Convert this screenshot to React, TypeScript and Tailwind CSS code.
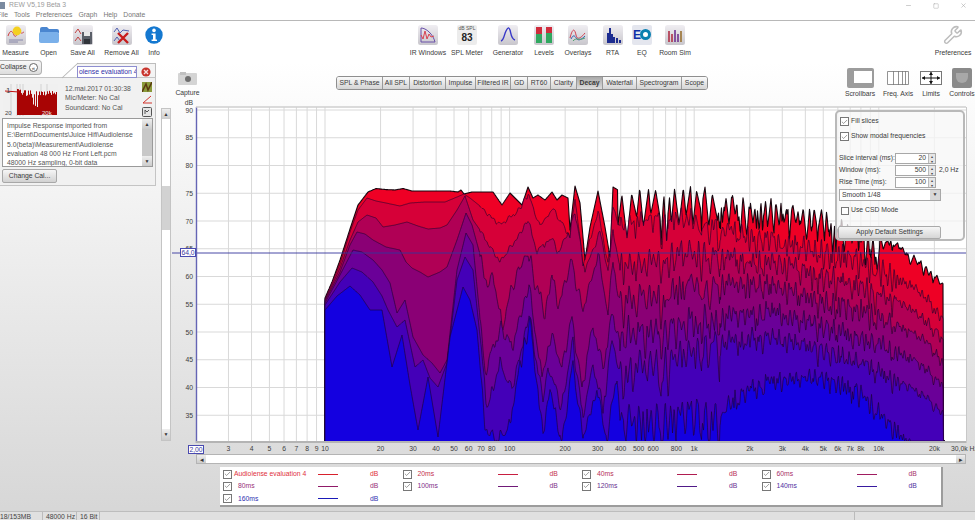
import React from "react";
import { Check, Minus, Square, Wrench, X } from "lucide-react";

type Pt = [number, number];

// ---------- decay chart data ----------
const fx = (f: number) => 325 + 184.6 * Math.log10(f / 10);
const dbY = (db: number) => 110 + (90 - db) * 5.55;

const SLICE_COLORS = ["#ee0025", "#d60038", "#b00055", "#8a0075", "#6a0098", "#4400b8", "#1400e0"];

const LEFT: Pt[][] = [
  [[325,298],[332,282],[340,260],[350,229],[358,205],[368,192],[376,188.5],[385,189.5],[395,190],[403,188.5],[412,191],[430,191],[450,191],[458,192],[461,190],[464,194],[472,192],[493,192],[502,205],[510,193],[522,205],[528,187],[533,198],[538,195],[545,200],[552,192],[557,200],[562,195],[568,198],[570,230],[575,186],[580,203],[585,260],[590,227],[598,191],[605,227],[610,257],[613,187],[618,190]],
  [[325,299],[340,264],[350,232],[358,210],[367,198],[376,201],[386,203],[400,206],[410,203],[425,202],[445,202],[457,197],[464,194],[470,198],[485,210],[500,223],[517,212],[528,192],[540,225],[553,208],[562,222],[570,235],[575,195],[583,265],[598,210],[608,262],[613,205],[620,225]],
  [[325,300],[340,268],[350,240],[358,222],[367,215],[376,218],[383,227],[395,225],[407,222],[418,226],[428,229],[440,228],[447,225],[457,210],[465,196],[473,220],[487,240],[500,260],[517,237],[528,218],[537,250],[553,237],[557,253],[567,233],[575,210],[585,270],[600,230],[608,270],[613,230],[620,265]],
  [[325,301],[340,272],[350,245],[357,232],[365,234],[373,240],[386,247],[400,250],[406,262],[412,268],[420,272],[428,277],[440,272],[447,267],[457,240],[466,213],[472,225],[487,280],[493,273],[502,322],[513,280],[528,248],[545,313],[552,273],[558,300],[572,257],[583,310],[598,253],[608,310],[613,260],[620,300]],
  [[325,303],[340,275],[353,250],[362,252],[373,260],[382,270],[390,283],[397,313],[405,300],[413,337],[423,355],[432,363],[440,373],[447,360],[457,270],[466,233],[473,245],[485,370],[492,347],[502,322],[512,345],[529,282],[542,377],[552,333],[562,363],[572,313],[582,387],[593,323],[603,363],[612,313],[620,335]],
  [[325,305],[340,282],[352,268],[362,272],[373,282],[382,296],[388,310],[397,327],[405,320],[415,367],[423,360],[430,378],[438,387],[447,363],[457,280],[465,257],[473,270],[487,403],[500,360],[512,387],[529,310],[543,400],[548,367],[562,403],[573,337],[583,417],[593,363],[603,403],[612,337],[620,370]],
  [[325,310],[337,296],[350,286],[360,295],[370,310],[382,310],[392,367],[402,335],[410,385],[418,430],[428,377],[438,437],[450,337],[463,287],[470,300],[477,330],[485,423],[497,437],[510,423],[520,360],[530,318],[543,433],[550,387],[562,440],[573,357],[583,437],[597,387],[607,437],[617,370],[620,420]],
];

const RIGHT_X = [680, 720, 750, 780, 820, 860, 900, 930, 943];
const RIGHT_Y = [
  [184, 188, 194, 196, 208, 222, 243, 266, 282],
  [212, 224, 232, 238, 245, 256, 276, 298, 318],
  [250, 252, 256, 260, 270, 282, 300, 322, 338],
  [285, 280, 278, 284, 296, 304, 324, 342, 362],
  [322, 312, 308, 310, 321, 332, 350, 370, 384],
  [355, 338, 334, 336, 345, 358, 380, 398, 413],
  [410, 410, 384, 378, 372, 388, 432, 458, 470],
];

function lerpAt(pts: Pt[], x: number) {
  if (x <= pts[0][0]) return pts[0][1];
  for (let i = 1; i < pts.length; i++) {
    if (x <= pts[i][0]) {
      const [x0, y0] = pts[i - 1];
      const [x1, y1] = pts[i];
      return y0 + ((y1 - y0) * (x - x0)) / (x1 - x0);
    }
  }
  return pts[pts.length - 1][1];
}

function rng(seed: number) {
  let s = seed;
  return () => {
    s = (s * 16807) % 2147483647;
    return s / 2147483647;
  };
}

// zigzag noise, 0..1, one value per x
function jag(seed: number, spacing: number) {
  const r = rng(seed);
  const knots: Pt[] = [];
  let x = 320;
  let up = true;
  while (x < 960) {
    knots.push([x, up ? r() * 0.12 : 0.35 + r() * 0.65]);
    x += spacing * (0.6 + r() * 0.9) * (x > 720 ? 0.7 : 1);
    up = !up;
  }
  return (v: number) => lerpAt(knots, v);
}

function buildSlices() {
  const xs: number[] = [];
  for (let x = 325; x <= 944; x += 0.5) xs.push(x);
  const shared = jag(4711, 4.2);
  const top = jag(977, 3.6);
  let prev: number[] = [];
  return LEFT.map((left, k) => {
    const own = jag(1201 + k * 397, 2.2);
    const anchors: Pt[] = [...left, ...RIGHT_X.map((x, i): Pt => [x, RIGHT_Y[k][i]])];
    const ys = xs.map((x, i) => {
      let y = lerpAt(anchors, x);
      const s = shared(x);
      if (k === 0) {
        if (x >= 618) {
          const depth = x < 720 ? 62 : x < 880 ? 44 : 16;
          y += Math.max(top(x) * depth, s * s * depth);
        }
      } else if (x >= 480) {
        const base = x < 620 ? (k < 3 ? 10 : 26) : x < 720 ? 55 + k * 6 : x < 900 ? 48 - k * 2 : 20;
        y += (0.55 * s + 0.45 * own(x) - 0.25) * base;
      }
      if (k > 0) y = Math.max(y, prev[i]);
      return x >= 943.5 ? 441 : Math.min(y, 441);
    });
    prev = ys;
    return "M325 441 " + xs.map((x, i) => `L${x} ${ys[i].toFixed(1)}`).join(" ") + " L945 441";
  });
}

const SLICES = buildSlices();
const DB_TICKS = [90, 85, 80, 75, 70, 65, 60, 55, 50, 45, 40, 35];
const GRID_F = [3, 4, 5, 6, 7, 8, 9, 10, 20, 30, 40, 50, 60, 70, 80, 90, 100, 200, 300, 400, 500, 600, 700, 800, 900, 1000, 2000, 3000, 4000, 5000, 6000, 7000, 8000, 9000, 10000, 20000];
const FREQ_LABELS: [number, string][] = [
  [3,"3"],[4,"4"],[5,"5"],[6,"6"],[7,"7"],[8,"8"],[9,"9"],[10,"10"],[20,"20"],[30,"30"],[40,"40"],[50,"50"],[60,"60"],[70,"70"],[80,"80"],[100,"100"],[200,"200"],[300,"300"],[400,"400"],[500,"500"],[600,"600"],[800,"800"],[1000,"1k"],[2000,"2k"],[3000,"3k"],[4000,"4k"],[5000,"5k"],[6000,"6k"],[7000,"7k"],[8000,"8k"],[10000,"10k"],[20000,"20k"],
];

function DecayChart() {
  return (
    <svg width="804" height="354" viewBox="171 100 804 354" className="block shrink-0">
      <rect x="196" y="107" width="770" height="334" fill="#ffffff" />
      {DB_TICKS.map((d) => (
        <line key={d} x1="196" x2="966" y1={dbY(d)} y2={dbY(d)} stroke="#d9d9d9" />
      ))}
      {GRID_F.map((f) => (
        <line key={f} x1={fx(f)} x2={fx(f)} y1="107" y2="441" stroke="#d9d9d9" />
      ))}
      {SLICES.map((d, k) => (
        <path
          key={k}
          d={d}
          fill={SLICE_COLORS[k]}
          stroke={k === 0 ? "#0c0008" : "#1c0030"}
          strokeOpacity={k === 0 ? 0.95 : 0.72}
          strokeWidth={k === 0 ? 1.1 : 0.85}
          strokeLinejoin="round"
        />
      ))}
      <line x1="172" x2="966" y1="253" y2="253" stroke="#33339c" strokeWidth="0.9" />
      <line x1="196.5" x2="196.5" y1="107" y2="443" stroke="#6565b5" strokeWidth="1.4" />
      <line x1="196" x2="966" y1="442" y2="442" stroke="#b4b4b4" strokeWidth="2" />
      <line x1="196" x2="966" y1="107" y2="107" stroke="#cfcfcf" strokeWidth="1.5" />
      <line x1="966.5" x2="966.5" y1="107" y2="443" stroke="#c8c8c8" />

      <g fontSize="6.8" fill="#3c3c3c">
        <text x="193" y="105" textAnchor="end">dB</text>
        {DB_TICKS.map((d) => (
          <text key={d} x="193" y={dbY(d) + 2.5} textAnchor="end">{d}</text>
        ))}
        {FREQ_LABELS.map(([f, t]) => (
          <text key={f} x={fx(f)} y="451" textAnchor="middle">{t}</text>
        ))}
        <text x="951" y="451">30,0k Hz</text>
      </g>

      <rect x="180.5" y="248.5" width="15" height="8" fill="#ffffff" stroke="#4a4ab0" />
      <text x="188" y="255" fontSize="6.8" fill="#3a3aa0" textAnchor="middle">64,0</text>
      <rect x="188.5" y="445.5" width="15" height="8" fill="#ffffff" stroke="#4a4ab0" />
      <text x="196" y="452" fontSize="6.8" fill="#3a3aa0" textAnchor="middle">2,00</text>
    </svg>
  );
}

// ---------- small widgets ----------
function Tile({ children, className = "" }: { children: React.ReactNode; className?: string }) {
  return (
    <svg width="20" height="20" viewBox="0 0 20 20" className={className}>
      <rect x="0" y="0" width="20" height="20" rx="2.5" fill="url(#tile)" />
      {children}
    </svg>
  );
}

function Tool({ label, w, children }: { label: string; w: string; children: React.ReactNode }) {
  return (
    <div className={`flex shrink-0 flex-col items-center ${w}`}>
      <div className="flex h-[21px] items-center justify-center">{children}</div>
      <span className="mt-[3px] whitespace-nowrap leading-[9px]">{label}</span>
    </div>
  );
}

function CheckBox({ className = "" }: { className?: string }) {
  return (
    <span className={`flex h-[9px] w-[9px] shrink-0 items-center justify-center border border-[#777] bg-white ${className}`}>
      <Check size={8} strokeWidth={2} color="#555" />
    </span>
  );
}

function Spin() {
  return (
    <span className="flex h-full w-[7px] flex-col border-l border-[#bbb] bg-[#e6e6e6] text-[4px] leading-[5px] text-[#444]">
      <span className="flex-1 text-center">▴</span>
      <span className="flex-1 text-center">▾</span>
    </span>
  );
}

function NumField({ value }: { value: string }) {
  return (
    <div className="flex h-[11px] w-[41px] items-center justify-end border border-[#a8a8a8] bg-white text-right">
      <span className="pr-[2px]">{value}</span>
      <Spin />
    </div>
  );
}

function ScrollBtn({ glyph, className = "" }: { glyph: string; className?: string }) {
  return (
    <span className={`flex items-center justify-center bg-linear-to-b from-[#eeeeee] to-[#cccccc] text-[5px] leading-none text-[#333] ${className}`}>
      {glyph}
    </span>
  );
}

const TABS = [
  { t: "SPL & Phase", w: "w-[46px]" },
  { t: "All SPL", w: "w-[27px]" },
  { t: "Distortion", w: "w-[36px]" },
  { t: "Impulse", w: "w-[30px]" },
  { t: "Filtered IR", w: "w-[35px]" },
  { t: "GD", w: "w-[17px]" },
  { t: "RT60", w: "w-[23px]" },
  { t: "Clarity", w: "w-[26px]" },
  { t: "Decay", w: "w-[26px]", on: true },
  { t: "Waterfall", w: "w-[34px]" },
  { t: "Spectrogram", w: "w-[45px]" },
  { t: "Scope", w: "w-[25px]" },
];

const LEGEND = [
  { t: "Audiolense evaluation 4", c: "text-[#e0303c]", l: "bg-[#d8202c]", first: true },
  { t: "20ms", c: "text-[#c4304e]", l: "bg-[#c81e40]" },
  { t: "40ms", c: "text-[#b83058]", l: "bg-[#b01c50]" },
  { t: "60ms", c: "text-[#a83068]", l: "bg-[#a01c60]" },
  { t: "80ms", c: "text-[#983078]", l: "bg-[#901a68]" },
  { t: "100ms", c: "text-[#803088]", l: "bg-[#701a78]" },
  { t: "120ms", c: "text-[#683090]", l: "bg-[#501a88]" },
  { t: "140ms", c: "text-[#5030a0]", l: "bg-[#381aa0]" },
  { t: "160ms", c: "text-[#3030b0]", l: "bg-[#1a1ab8]" },
];

function ThumbChart() {
  const bars: string[] = [];
  const r = rng(31);
  for (let x = 14; x < 54; x += 1) {
    const h = x < 18 ? 5 + r() * 3 : 6 + r() * (x > 28 && x < 36 ? 18 : 6);
    bars.push(`M${x + 0.5} 31V${h.toFixed(1)}`);
  }
  return (
    <svg width="55" height="32" viewBox="0 0 55 32" className="block shrink-0">
      <rect width="55" height="32" fill="#f0f0f0" />
      {[8, 14, 17, 20, 38, 44].map((x) => (
        <line key={x} x1={x} x2={x} y1="0" y2="32" stroke="#d2d2d2" />
      ))}
      <path d={bars.join("")} stroke="#a80404" strokeWidth="1" />
      <line x1="2" x2="16" y1="7" y2="8" stroke="#c01010" />
      <text x="3" y="9" fontSize="8" fill="#444">1</text>
      <text x="2" y="31" fontSize="6" fill="#444">20</text>
      <text x="39" y="31" fontSize="6" fill="#eee">20k</text>
    </svg>
  );
}

function LeftPanel() {
  return (
    <aside className="relative w-[161px] shrink-0 pt-[3px]">
      <div className="absolute left-[59px] top-[13px] h-px w-[22px] -rotate-[43deg] bg-[#b5b5b5]" />
      <div className="flex h-[17px] w-[156px] items-start justify-between">
        <div className="flex h-[15px] w-[42px] items-center justify-between rounded-r-[4px] border border-l-0 border-[#b0b0b0] bg-linear-to-b from-[#f8f8f8] to-[#dddddd] pr-[3px]">
          <span>Collapse</span>
          <span className="flex h-[9px] w-[9px] items-center justify-center rounded-full border border-[#666] bg-white text-[6px] leading-none">«</span>
        </div>
        <div className="mt-[3px] flex h-[14px] w-[79px] items-start border-r border-t border-[#bdbdbd] bg-[#f4f4f4] pt-[2px]">
          <div className="h-[12px] w-[60px] overflow-hidden whitespace-nowrap border border-[#8e8ed0] bg-white pl-[1px] text-[6.8px] leading-[10px] text-[#3030a8]">
            olense evaluation 4
          </div>
          <svg width="10" height="10" viewBox="0 0 10 10" className="ml-[4px] mt-[1px]">
            <circle cx="5" cy="5" r="4.6" fill="#c8342c" />
            <path d="M3 3l4 4M7 3l-4 4" stroke="#f4dcdc" strokeWidth="1.4" />
          </svg>
        </div>
      </div>
      <div className="h-[109px] w-[156px] border-b border-r border-t border-[#c4c4c4] bg-[#f1f1f1] pl-[2px]">
        <div className="flex h-[39px] items-start pt-[6px]">
          <div className="ml-[1px]"><ThumbChart /></div>
          <div className="ml-[7px] w-[77px] leading-[9.3px] text-[#555]">
            <div>12.mai.2017 01:30:38</div>
            <div>Mic/Meter: No Cal</div>
            <div>Soundcard: No Cal</div>
          </div>
          <div className="-mt-[2px] flex flex-col items-center gap-[3px]">
            <svg width="10" height="10" viewBox="0 0 10 10">
              <rect width="10" height="10" fill="#8a9a3a" />
              <path d="M0 10L4 2l2 6 4-8" stroke="#5a3a10" fill="none" strokeWidth="1.5" />
            </svg>
            <svg width="9" height="9" viewBox="0 0 9 9">
              <path d="M0 8L8 1M0 8h9" stroke="#d0342c" fill="none" />
            </svg>
            <svg width="10" height="10" viewBox="0 0 10 10">
              <rect x=".5" y=".5" width="9" height="9" rx="1" fill="#e4e4e4" stroke="#555" />
              <path d="M3 7V3l2 2 2-2" stroke="#555" fill="none" />
            </svg>
          </div>
        </div>
        <div className="mt-[1px] flex h-[49px] w-[151px] border border-[#9a9a9a] bg-white">
          <div className="flex-1 overflow-hidden whitespace-nowrap pl-[4px] pt-[2px] leading-[9.3px] text-[#555]">
            Impulse Response imported from<br />
            E:\Bernt\Documents\Juice Hifi\Audiolense<br />
            5.0(beta)\Measurement\Audiolense<br />
            evaluation 48 000 Hz Front Left.pcm<br />
            48000 Hz sampling, 0-bit data
          </div>
          <div className="flex w-[10px] flex-col bg-[#c8c8c8]">
            <ScrollBtn glyph="▲" className="h-[10px]" />
            <div className="flex-1" />
            <ScrollBtn glyph="▼" className="h-[10px]" />
          </div>
        </div>
        <div className="mt-[2px] flex h-[14px] w-[55px] items-center justify-center rounded-[2px] border border-[#a8a8a8] bg-linear-to-b from-[#f6f6f6] to-[#d2d2d2]">
          Change Cal...
        </div>
      </div>
    </aside>
  );
}

function ControlsPanel() {
  return (
    <div className="absolute left-[674px] top-[10px] flex h-[131px] w-[130px] flex-col whitespace-nowrap rounded-[5px] border-2 border-[#b9b9b9] bg-[#f7f7f7]/75 pl-[2px] pt-[4px]">
      <div className="flex h-[11px] items-center gap-[2px] pl-[1px]"><CheckBox />Fill slices</div>
      <div className="mt-[4px] flex h-[11px] items-center gap-[2px] pl-[1px]"><CheckBox />Show modal frequencies</div>
      <div className="mt-[11px] flex h-[11px] items-center"><span className="w-[56px]">Slice interval (ms):</span><NumField value="20" /></div>
      <div className="mt-px flex h-[11px] items-center"><span className="w-[56px]">Window (ms):</span><NumField value="500" /><span className="ml-[3px]">2,0 Hz</span></div>
      <div className="mt-px flex h-[11px] items-center"><span className="w-[56px]">Rise Time (ms):</span><NumField value="100" /></div>
      <div className="mt-[1px] flex h-[12px] w-[102px] items-center justify-between border border-[#a8a8a8] bg-white pl-[2px]">
        Smooth 1/48
        <span className="flex h-full w-[10px] items-center justify-center bg-[#d8d8d8] text-[5px]">▼</span>
      </div>
      <div className="mt-[5px] flex h-[9px] items-center gap-[2px] pl-[2px]">
        <span className="h-[8px] w-[8px] border border-[#777] bg-white/70" />Use CSD Mode
      </div>
      <div className="-ml-[1px] mt-[11px] flex h-[13px] w-[103px] items-center justify-center rounded-[2px] border border-[#aaa] bg-linear-to-b from-[#f6f6f6] to-[#d6d6d6]">
        Apply Default Settings
      </div>
    </div>
  );
}

export default function App() {
  return (
    <div className="flex h-[520px] w-[975px] flex-col overflow-hidden bg-linear-to-b from-white from-[12%] to-[#d6d6d6] font-['Liberation_Sans',sans-serif] text-[6.8px] text-[#3a3a3a]">
      {/* shared gradient for the icon tiles */}
      <svg width="0" height="0" className="absolute">
        <defs>
          <linearGradient id="tile" x1="0" y1="0" x2="0" y2="1">
            <stop offset="0" stopColor="#f0eef2" />
            <stop offset="1" stopColor="#c8c6cc" />
          </linearGradient>
        </defs>
      </svg>

      {/* title bar */}
      <div className="flex h-[11px] items-center text-[#9a9a9a]">
        <span className="h-[7px] w-[5px] bg-[#7a8aa0]" />
        <span className="ml-[4px]">REW V5,19 Beta 3</span>
        <div className="ml-auto flex items-center gap-[21px] pr-[8px] text-[#aaa]">
          <Minus size={7} /><Square size={6} /><X size={7} />
        </div>
      </div>

      {/* menu */}
      <div className="-ml-[3px] flex h-[10px] items-center gap-[6px] border-b border-[#b8b8b8] pb-px text-[#777]">
        <span>File</span><span>Tools</span><span>Preferences</span><span>Graph</span><span>Help</span><span>Donate</span>
      </div>

      {/* toolbar */}
      <div className="flex h-[36px] items-start pt-[3px]">
        <Tool label="Measure" w="w-[31px]">
          <Tile>
            <path d="M2 11c2-6 4-6 6-1s4-5 6-3 2 1 4 0" stroke="#d04040" fill="none" />
            <circle cx="11" cy="6" r="4.4" fill="#f4d020" />
            <path d="M3 15h14M3 17h9" stroke="#8888aa" />
          </Tile>
        </Tool>
        <Tool label="Open" w="w-[35px]">
          <svg width="20" height="18" viewBox="0 0 20 18">
            <path d="M1 3q0-2 2-2h5l2 2h8q2 0 2 2v2H1z" fill="#4a86d0" />
            <rect x="0" y="6" width="20" height="11" rx="2" fill="#7ab0ea" />
          </svg>
        </Tool>
        <Tool label="Save All" w="w-[33px]">
          <Tile>
            <path d="M2 8l3-4 3 5M2 16l3-4 3 4" stroke="#c04040" fill="none" />
            <rect x="9" y="7" width="10" height="12" fill="#5a5f68" />
            <rect x="11" y="7" width="6" height="4" fill="#e8e8e8" />
            <rect x="11" y="14" width="6" height="5" fill="#30343a" />
          </Tile>
        </Tool>
        <Tool label="Remove All" w="w-[45px]">
          <Tile>
            <path d="M2 7l3-4 3 5 3-3 6 1M2 16l3-4 3 4" stroke="#5060b0" fill="none" />
            <path d="M6 8l10 10M16 8L6 18" stroke="#c81c1c" strokeWidth="2.4" />
          </Tile>
        </Tool>
        <Tool label="Info" w="w-[20px]">
          <svg width="18" height="18" viewBox="0 0 18 18">
            <circle cx="9" cy="9" r="8.7" fill="#1478d0" />
            <circle cx="9" cy="4.4" r="1.8" fill="#fff" />
            <path d="M6.6 7.5h4v6h1.4v1.6H6.6v-1.6H8V9.1H6.6z" fill="#fff" />
          </svg>
        </Tool>

        <div className="ml-[244px] flex">
          <Tool label="IR Windows" w="w-[40px]">
            <Tile>
              <path d="M3 3c5 0 12 6 14 14H3z" fill="none" stroke="#6a50a8" />
              <path d="M3 10l2 4 2-8 2 8 2-5 2 3 3-1" fill="none" stroke="#d84050" />
            </Tile>
          </Tool>
          <Tool label="SPL Meter" w="w-[38px]">
            <div className="flex h-[20px] w-[20px] flex-col items-center rounded-[2px] bg-[#ececec]">
              <span className="text-[5px] leading-[7px] text-[#555]">dB SPL</span>
              <span className="text-[10px] font-bold leading-[11px] text-[#222]">83</span>
            </div>
          </Tool>
          <Tool label="Generator" w="w-[44px]">
            <Tile>
              <path d="M3 16c3-1 3-6 5-10s3-4 4-1 1 9 5 10" fill="none" stroke="#3838c8" strokeWidth="1.4" />
            </Tile>
          </Tool>
          <Tool label="Levels" w="w-[28px]">
            <Tile>
              <rect x="2" y="2" width="6" height="16" fill="#30a860" />
              <rect x="2" y="2" width="6" height="7" fill="#d02c3c" />
              <rect x="12" y="2" width="6" height="16" fill="#30a860" />
              <rect x="12" y="2" width="6" height="6" fill="#d02c3c" />
            </Tile>
          </Tool>
          <Tool label="Overlays" w="w-[40px]">
            <Tile>
              <path d="M2 13c3-12 5-8 6-3s4 4 9-2" fill="none" stroke="#d04050" />
              <path d="M3 14c3-6 4-2 6 0s5 0 8-3" fill="none" stroke="#3060b0" />
              <path d="M5 16c3-4 6 0 12-3" fill="none" stroke="#50a070" />
            </Tile>
          </Tool>
          <Tool label="RTA" w="w-[29px]">
            <Tile>
              <path d="M4 18V8h2V3h2v6h2v3h2v6zM13 18v-5h2v5zM16 18v-3h2v3z" fill="#1c2c90" />
            </Tile>
          </Tool>
          <Tool label="EQ" w="w-[30px]">
            <div className="flex h-[20px] w-[20px] items-center justify-center rounded-[2px] bg-[#e4e6ee]">
              <span className="text-[12px] font-bold leading-none tracking-[-1px] text-[#1030a8]">E</span>
              <span className="h-[11px] w-[11px] rounded-full border-[3px] border-[#0a80b0] bg-white" />
            </div>
          </Tool>
          <Tool label="Room Sim" w="w-[36px]">
            <Tile>
              <path d="M4 17V6M7 17V9" stroke="#b03048" strokeWidth="1.6" />
              <path d="M10 17V5M13 17V9" stroke="#703090" strokeWidth="1.6" />
              <path d="M16 17V6" stroke="#987030" strokeWidth="1.6" />
            </Tile>
          </Tool>
        </div>

        <div className="ml-auto">
          <Tool label="Preferences" w="w-[44px]">
            <Wrench size={20} color="#bdbdbd" strokeWidth={1.8} />
          </Tool>
        </div>
      </div>

      {/* main */}
      <div className="flex min-h-0 flex-1">
        <LeftPanel />

        <div className="flex w-[814px] flex-col">
          <div className="flex h-[43px] items-start">
            <div className="ml-[14px] mt-[15px] flex w-[25px] flex-col items-center">
              <svg width="19" height="13" viewBox="0 0 19 13">
                <rect y="1" width="19" height="12" rx="1" fill="#d4d4d4" />
                <rect x="2" width="6" height="3" fill="#c0c0c0" />
                <circle cx="10" cy="7" r="3" fill="#6e6e6e" />
              </svg>
              <span className="mt-[3px]">Capture</span>
            </div>
            <div className="ml-[136px] mt-[19px] flex h-[14px] overflow-hidden rounded-[3px] border border-[#8e8e8e]">
              {TABS.map((tab) => (
                <span
                  key={tab.t}
                  className={`flex items-center justify-center whitespace-nowrap border-r border-[#9a9a9a] last:border-r-0 ${tab.w} ${
                    tab.on ? "bg-linear-to-b from-[#a8a8a8] to-[#dedede] font-bold" : "bg-linear-to-b from-[#fafafa] to-[#d4d4d4]"
                  }`}
                >
                  {tab.t}
                </span>
              ))}
            </div>
            <div className="ml-auto mt-[11px] flex items-start">
              <div className="flex w-[36px] flex-col items-center">
                <div className="flex h-[20px] w-[27px] items-center justify-end rounded-[2px] bg-[#9c9c9c] pr-[2px]">
                  <span className="mb-[3px] h-[12px] w-[18px] bg-white" />
                </div>
                <span className="mt-[1px] leading-[9px]">Scrollbars</span>
              </div>
              <div className="flex w-[40px] flex-col items-center">
                <div className="flex h-[20px] w-[22px] items-center justify-center py-[3px]">
                  <svg width="22" height="14" viewBox="0 0 22 14">
                    <path d="M.5.5h21v13H.5zM6.5 0v14M11.5 0v14M15.5 0v14M18.5 0v14" fill="#fff" stroke="#777" strokeWidth=".8" />
                  </svg>
                </div>
                <span className="mt-[1px] leading-[9px]">Freq. Axis</span>
              </div>
              <div className="flex w-[26px] flex-col items-center">
                <div className="flex h-[20px] items-center">
                  <svg width="22" height="14" viewBox="0 0 22 14">
                    <rect x=".5" y=".5" width="21" height="13" fill="#fff" stroke="#777" />
                    <path d="M2 7h18M11 1v12" stroke="#111" />
                    <path d="M2 7l3-2v4zM20 7l-3-2v4zM11 1l-2 3h4zM11 13l-2-3h4z" fill="#111" />
                  </svg>
                </div>
                <span className="mt-[1px] leading-[9px]">Limits</span>
              </div>
              <div className="ml-[5px] flex w-[26px] flex-col items-center">
                <div className="flex h-[20px] w-[20px] items-center justify-center rounded-[2px] bg-[#8a8a8a]">
                  <span className="h-[10px] w-[12px] rounded-b-full bg-[#a8a8a8]" />
                </div>
                <span className="mt-[1px] leading-[9px]">Controls</span>
              </div>
            </div>
          </div>

          <div className="relative flex items-start">
            <div className="mt-[8px] flex h-[333px] w-[10px] shrink-0 flex-col border border-[#c4c4c4] bg-white">
              <ScrollBtn glyph="▲" className="h-[10px] shrink-0" />
              <div className="mt-[67px] h-[44px] shrink-0 bg-[#d2d2d2]" />
              <div className="flex-1" />
              <ScrollBtn glyph="▼" className="h-[11px] shrink-0" />
            </div>
            <DecayChart />
            <ControlsPanel />
          </div>

          <div className="ml-[35px] flex h-[10px] w-[770px] justify-between border border-[#b4b4b4] bg-white">
            <ScrollBtn glyph="◂" className="w-[9px] text-[7px]" />
            <ScrollBtn glyph="▸" className="w-[9px] text-[7px]" />
          </div>

          <div className="ml-[59px] mt-[3px] grid h-[40px] w-[723px] grid-cols-4 grid-rows-3 border-b-2 border-r-2 border-[#9c9c9c] bg-white pl-[3px] pt-[1px]">
            {LEGEND.map((item) => (
              <div key={item.t} className="flex items-center">
                <CheckBox />
                <span className={`w-[86px] whitespace-nowrap ${item.first ? "pl-[2px]" : "pl-[6px]"} ${item.c}`}>{item.t}</span>
                <span className={`h-px w-[20px] ${item.l}`} />
                <span className={`ml-[32px] ${item.c}`}>dB</span>
              </div>
            ))}
          </div>
        </div>
      </div>

      {/* status bar */}
      <div className="flex h-[9px] items-center border-t border-[#bdbdbd] bg-[#e0e0e0] text-[#444]">
        <span className="w-[43px] whitespace-nowrap border-r border-[#bbb] leading-[9px]">18/153MB</span>
        <span className="w-[34px] whitespace-nowrap border-r border-[#bbb] pl-[3px] leading-[9px]">48000 Hz</span>
        <span className="w-[23px] whitespace-nowrap border-r border-[#bbb] pl-[3px] leading-[9px]">16 Bit</span>
        <span className="ml-[754px] h-full border-l border-[#bbb]" />
      </div>
    </div>
  );
}
